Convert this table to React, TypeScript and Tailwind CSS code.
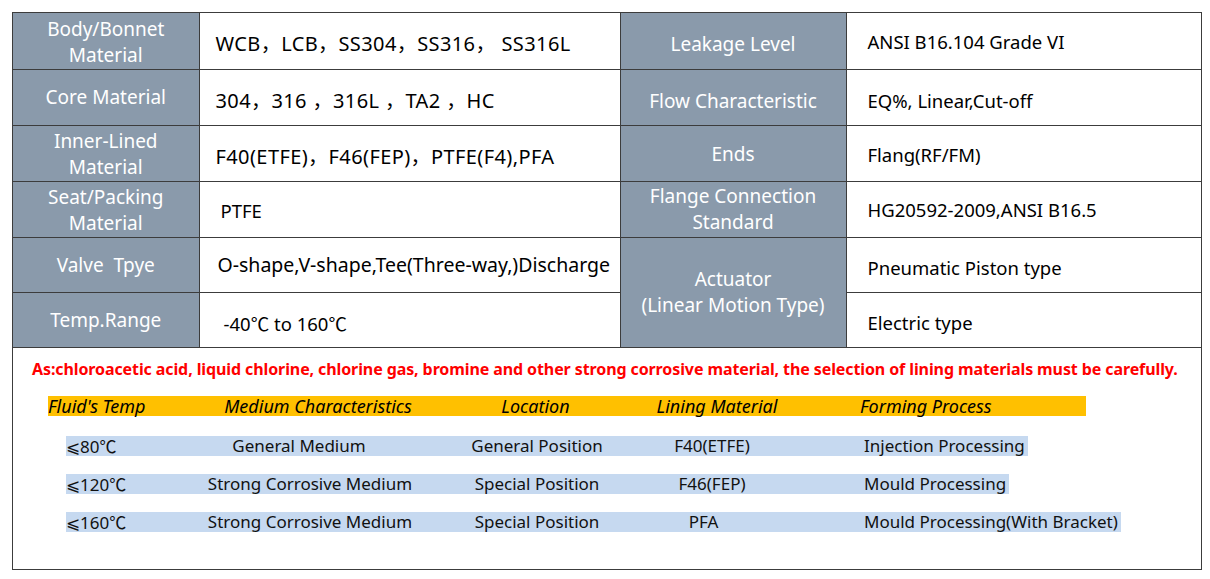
import React from "react";

const font = { fontFamily: '"Noto Sans", "Noto Sans CJK SC", sans-serif' };
const cjk = { fontFamily: '"Noto Sans CJK SC", "Noto Sans", sans-serif' };

const labelCell =
  "bg-[#8a9aab] text-white text-center align-middle border-r border-b border-[#3c3c3c] leading-[26px] text-[19px]";
const valueCell =
  "bg-white text-black align-middle border-r border-b border-[#3c3c3c] leading-[24px] whitespace-nowrap";

const Comma = () => <span style={cjk}>，</span>;

const rows = [
  {
    n: "80",
    medium: "General Medium",
    mediumPad: "pr-[22px]",
    loc: "General Position",
    lining: "F40(ETFE)",
    liningPad: "",
    process: "Injection Processing",
    pad: "",
  },
  {
    n: "120",
    medium: "Strong Corrosive Medium",
    mediumPad: "",
    loc: "Special Position",
    lining: "F46(FEP)",
    liningPad: "",
    process: "Mould Processing",
    pad: "",
  },
  {
    n: "160",
    medium: "Strong Corrosive Medium",
    mediumPad: "",
    loc: "Special Position",
    lining: "PFA",
    liningPad: "pr-[17px]",
    process: "Mould Processing(With Bracket)",
    pad: "pl-[3px]",
  },
];

export default function App() {
  return (
    <div className="w-[1210px] h-[579px] bg-white pt-[12px] pl-[12px]" style={font}>
      <div className="w-[1190px] h-[558px] border border-[#3c3c3c]">
        {/* SPEC TABLE */}
        <table className="border-collapse table-fixed w-[1188px]">
          <colgroup>
            <col className="w-[186px]" />
            <col className="w-[421px]" />
            <col className="w-[226px]" />
            <col className="w-[355px]" />
          </colgroup>
          <tbody>
            <tr className="h-[56px]">
              <td className={labelCell + " pt-[2px]"}>
                Body/Bonnet
                <br />
                Material
              </td>
              <td className={valueCell + " pl-[16px] pt-[6px] text-[20px] tracking-[0.4px]"}>
                WCB<Comma />LCB<Comma />SS304<Comma />SS316<Comma /> SS316L
              </td>
              <td className={labelCell + " pt-[6px]"}>Leakage Level</td>
              <td className={valueCell + " pl-[21px] text-[18.5px] pt-[3px]"}>ANSI B16.104 Grade VI</td>
            </tr>
            <tr className="h-[56px]">
              <td className={labelCell}>Core Material</td>
              <td className={valueCell + " pl-[16px] pt-[6px] text-[20px] tracking-[0.4px]"}>
                304<Comma />316 <Comma />316L <Comma />TA2 <Comma />HC
              </td>
              <td className={labelCell + " pt-[8px]"}>Flow Characteristic</td>
              <td className={valueCell + " pl-[21px] text-[18.5px] pt-[8px]"}>EQ%, Linear,Cut-off</td>
            </tr>
            <tr className="h-[56px]">
              <td className={labelCell + " pt-[2px]"}>
                Inner-Lined
                <br />
                Material
              </td>
              <td className={valueCell + " pl-[16px] pt-[6px] text-[20px] tracking-[0.4px]"}>
                F40(ETFE)<Comma />F46(FEP)<Comma />PTFE(F4),PFA
              </td>
              <td className={labelCell + " pt-[2px]"}>Ends</td>
              <td className={valueCell + " pl-[21px] text-[18.5px] pt-[4px]"}>Flang(RF/FM)</td>
            </tr>
            <tr className="h-[56px]">
              <td className={labelCell + " pt-[2px]"}>
                Seat/Packing
                <br />
                Material
              </td>
              <td className={valueCell + " pl-[21px] pt-[4px] text-[18.5px]"}>PTFE</td>
              <td className={labelCell}>
                Flange Connection
                <br />
                Standard
              </td>
              <td className={valueCell + " pl-[21px] text-[18.5px] pt-[2px]"}>HG20592-2009,ANSI B16.5</td>
            </tr>
            <tr className="h-[55px]">
              <td className={labelCell}>Valve&nbsp; Tpye</td>
              <td className={valueCell + " pl-[18px] text-[19.5px]"}>O-shape,V-shape,Tee(Three-way,)Discharge</td>
              <td className={labelCell} rowSpan={2}>
                Actuator
                <br />
                (Linear Motion Type)
              </td>
              <td className={valueCell + " pl-[21px] text-[18.5px] pt-[6px]"}>Pneumatic Piston type</td>
            </tr>
            <tr className="h-[55px]">
              <td className={labelCell}>Temp.Range</td>
              <td className={valueCell + " pl-[24px] pt-[7px] text-[18.5px]"}>
                -40<span style={cjk}>℃</span> to 160<span style={cjk}>℃</span>
              </td>
              <td className={valueCell + " pl-[21px] text-[18.5px] pt-[7px]"}>Electric type</td>
            </tr>
          </tbody>
        </table>

        {/* NOTE */}
        <p className="mt-[10px] pl-[19px] text-[16px] leading-[22px] font-bold text-[#ff0000] tracking-[-0.1px] whitespace-nowrap">
          As:chloroacetic acid, liquid chlorine, chlorine gas, bromine and other strong corrosive material, the selection of lining materials must be carefully.
        </p>

        {/* LINING TABLE HEADER */}
        <div className="mt-[16px] ml-[35px] w-[1038px] h-[20px] bg-[#ffc000] flex italic text-[18px] leading-[20px] text-black whitespace-nowrap">
          <div className="w-[152px]">Fluid's Temp</div>
          <div className="w-[236px] text-center">Medium Characteristics</div>
          <div className="w-[199px] text-center">Location</div>
          <div className="w-[164px] text-center">Lining Material</div>
          <div className="pl-[61px]">Forming Process</div>
        </div>

        {/* LINING ROWS */}
        <div className="mt-[20px] flex flex-col gap-[18px]">
          {rows.map((r, i) => (
            <div
              key={i}
              className="ml-[53px] w-fit h-[20px] bg-[#c6d9f0] flex text-[17px] leading-[20px] text-[#111] pr-[3px] whitespace-nowrap"
            >
              <div className="w-[134px]">
                <span style={{ fontFamily: '"DejaVu Sans", sans-serif' }} className="font-light">
                  ⩽
                </span>
                {r.n}
                <span style={cjk}>℃</span>
              </div>
              <div className={"w-[220px] text-center " + r.mediumPad}>{r.medium}</div>
              <div className="w-[234px] text-center">{r.loc}</div>
              <div className={"w-[116px] text-center " + r.liningPad}>{r.lining}</div>
              <div className={"pl-[94px] " + r.pad}>{r.process}</div>
            </div>
          ))}
        </div>
      </div>
    </div>
  );
}
